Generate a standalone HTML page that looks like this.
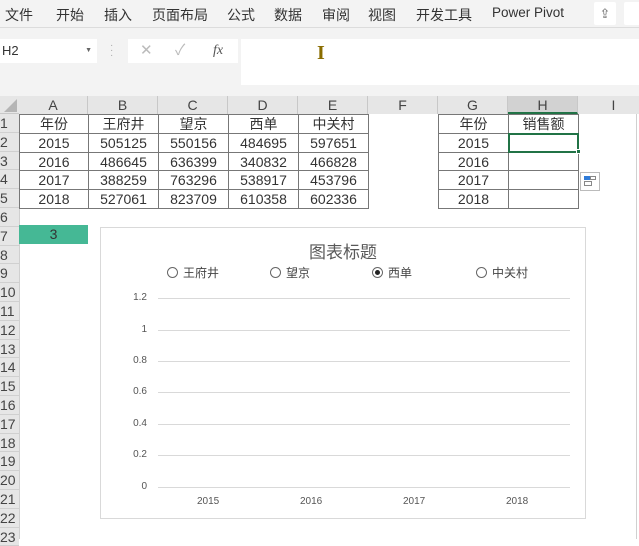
<!DOCTYPE html>
<html><head><meta charset="utf-8"><style>
*{margin:0;padding:0;box-sizing:border-box}
body{width:639px;height:539px;overflow:hidden;background:#fff;font-family:"Liberation Sans","Noto Sans CJK SC",sans-serif;position:relative;color:#222}
.a{position:absolute}
.menu{left:0;top:0;width:639px;height:28px;background:#f3f3f3;border-bottom:1px solid #dcdcdc}
.menu span{position:absolute;top:5px;font-size:14px;color:#333}
.fb{left:0;top:28px;width:639px;height:68px;background:#f3f3f3}
.hdr{background:#e6e6e6;color:#444;font-size:14px;text-align:center;line-height:18px}
.c{position:absolute;font-size:14px;text-align:center;color:#333;font-weight:normal}
.rn{position:absolute;left:0;width:19px;font-size:14px;color:#444;background:#e6e6e6;border-bottom:1px solid #d0d0d0;overflow:hidden;white-space:nowrap}
.rad{display:inline-block;width:11px;height:11px;border:1px solid #666;border-radius:50%;vertical-align:-1px;margin-right:5px;position:relative}
.lg{position:absolute;top:264px;font-size:12px;color:#444}
.yl{position:absolute;font-size:10px;color:#555;text-align:right;width:30px;left:117px}
.gl{position:absolute;left:158px;width:412px;height:1px;background:#d9d9d9}
.xl{position:absolute;top:496px;font-size:10px;color:#555}
</style></head><body>
<div class="a menu">
<span style="left:5px">文件</span><span style="left:56px">开始</span><span style="left:104px">插入</span><span style="left:152px">页面布局</span><span style="left:227px">公式</span><span style="left:274px">数据</span><span style="left:322px">审阅</span><span style="left:368px">视图</span><span style="left:416px">开发工具</span><span style="left:492px;font-size:13.5px">Power Pivot</span>
<div class="a" style="left:594px;top:2px;width:22px;height:23px;background:#fff;border-radius:2px;font-size:13px;color:#666;text-align:center;line-height:23px">⇪</div>
<div class="a" style="left:624px;top:2px;width:20px;height:23px;background:#fff;border-radius:2px"></div>
</div>
<div class="a fb">
<div class="a" style="left:0;top:11px;width:97px;height:24px;background:#fff;font-size:13px;line-height:24px;padding-left:2px;color:#333">H2<span style="position:absolute;right:5px;font-size:7px;color:#666">▼</span></div>
<div class="a" style="left:110px;top:15px;color:#aaa;font-size:10px;line-height:5px">·<br>·<br>·</div>
<div class="a" style="left:128px;top:11px;width:110px;height:24px;background:#fff;color:#bbb;font-size:15px;line-height:24px"><span style="position:absolute;left:12px">✕</span><span style="position:absolute;left:47px">✓</span><span style="position:absolute;left:85px;color:#555;font-family:'Liberation Serif',serif;font-style:italic;font-size:14px">fx</span></div>
<div class="a" style="left:241px;top:11px;width:398px;height:46px;background:#fff"></div>
<div class="a" style="left:317px;top:14px;font-family:'Liberation Serif',serif;font-weight:bold;font-size:20px;color:#8a6d00">I</div>
</div>
<div class="a hdr" style="left:0;top:96px;width:639px;height:18px;border-bottom:1px solid #c8c8c8"></div>
<div class="a" style="left:4px;top:99px;width:0;height:0;border-left:13px solid transparent;border-bottom:13px solid #b5b5b5"></div>
<div id="cols"></div>
<div class="a" style="left:636px;top:114px;width:1px;height:425px;background:#d0d0d0"></div>
<div class="a" style="left:19px;top:114px;width:1px;height:425px;background:#d0d0d0"></div>
<div class="a" style="left:19px;top:225px;width:69px;height:19px;background:#45b895;font-size:14px;text-align:center;line-height:19px;color:#333;font-weight:normal">3</div>
<div id="g"></div>
<div class="a" style="left:100px;top:227px;width:486px;height:292px;border:1px solid #d9d9d9;background:#fff"></div>
<div class="a" style="left:100px;top:238px;width:486px;text-align:center;font-size:17px;color:#595959">图表标题</div>
<div class="lg" style="left:167px"><span class="rad"></span>王府井</div>
<div class="lg" style="left:270px"><span class="rad"></span>望京</div>
<div class="lg" style="left:372px"><span class="rad"><span style="position:absolute;left:2px;top:2px;width:5px;height:5px;border-radius:50%;background:#222"></span></span>西单</div>
<div class="lg" style="left:476px"><span class="rad"></span>中关村</div>
<div class="gl" style="top:298px"></div><div class="yl" style="top:292px">1.2</div>
<div class="gl" style="top:330px"></div><div class="yl" style="top:324px">1</div>
<div class="gl" style="top:361px"></div><div class="yl" style="top:355px">0.8</div>
<div class="gl" style="top:392px"></div><div class="yl" style="top:386px">0.6</div>
<div class="gl" style="top:424px"></div><div class="yl" style="top:418px">0.4</div>
<div class="gl" style="top:455px"></div><div class="yl" style="top:449px">0.2</div>
<div class="gl" style="top:487px"></div><div class="yl" style="top:481px">0</div>
<div class="xl" style="left:197px">2015</div><div class="xl" style="left:300px">2016</div><div class="xl" style="left:403px">2017</div><div class="xl" style="left:506px">2018</div>
<script>
var cx=[19,88,158,228,298,368,438,508,578,650],L="ABCDEFGHI",h="";
for(var i=0;i<9;i++){var bg=i==7?'background:#d2d2d2;border-bottom:2px solid #217346;':'';h+='<div class="a hdr" style="left:'+cx[i]+'px;top:96px;width:'+(cx[i+1]-cx[i])+'px;height:18px;border-right:1px solid #c8c8c8;'+bg+'">'+L[i]+'</div>';}
document.getElementById("cols").innerHTML=h;
var R=18.8,g="";
function ty(n){return 114+(n-1)*R;}
for(var n=1;n<=23;n++){g+='<div class="rn" style="top:'+ty(n)+'px;height:'+R+'px;line-height:'+R+'px">'+n+'</div>';}
var d=[["年份","王府井","望京","西单","中关村"],["2015","505125","550156","484695","597651"],["2016","486645","636399","340832","466828"],["2017","388259","763296","538917","453796"],["2018","527061","823709","610358","602336"]];
var gt=["年份","2015","2016","2017","2018"],ht=["销售额","","","",""];
for(var r=0;r<5;r++){for(var c=0;c<5;c++){g+='<div class="c" style="left:'+cx[c]+'px;top:'+ty(r+1)+'px;width:'+(cx[c+1]-cx[c]+1)+'px;height:'+(R+1)+'px;line-height:'+R+'px;border:1px solid #777">'+d[r][c]+'</div>';}
g+='<div class="c" style="left:438px;top:'+ty(r+1)+'px;width:71px;height:'+(R+1)+'px;line-height:'+R+'px;border:1px solid #777">'+gt[r]+'</div>';
g+='<div class="c" style="left:508px;top:'+ty(r+1)+'px;width:71px;height:'+(R+1)+'px;line-height:'+R+'px;border:1px solid #777">'+ht[r]+'</div>';}
g+='<div class="a" style="left:508px;top:'+ty(2)+'px;width:71px;height:'+(R+1)+'px;border:2px solid #217346"></div><div class="a" style="left:576px;top:'+(ty(3)-3)+'px;width:5px;height:5px;background:#217346;border:1px solid #fff"></div>';
g+='<div class="a" style="left:580px;top:172px;width:20px;height:19px;border:1px solid #bbb;background:#fff"><div class="a" style="left:3px;top:3px;width:6px;height:4px;background:#2f7bd8"></div><div class="a" style="left:9px;top:3px;width:6px;height:4px;border:1px solid #888"></div><div class="a" style="left:3px;top:8px;width:8px;height:5px;border:1px solid #888"></div></div>';
document.getElementById("g").innerHTML=g;
</script>
</body></html>
